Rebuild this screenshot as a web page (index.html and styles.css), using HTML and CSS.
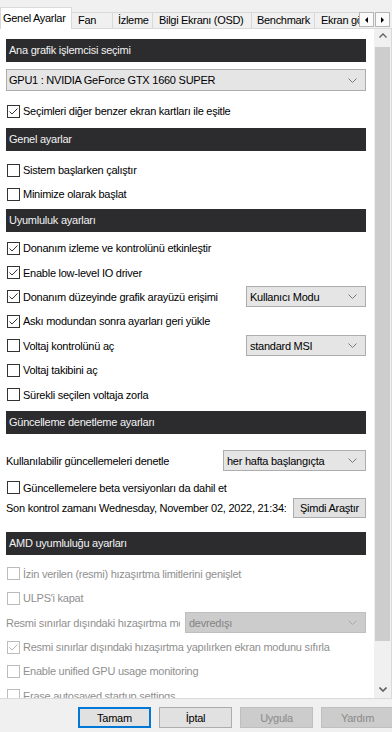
FILE: index.html
```html
<!DOCTYPE html>
<html lang="tr">
<head>
    <meta charset="UTF-8">
    <meta name="viewport" content="width=device-width, initial-scale=1.0">
    <title>Özellikler - Genel Ayarlar</title>
    <link rel="stylesheet" href="styles.css">
</head>
<body>
    <div class="window">
        <div class="tabs">
            <div class="tab active">Genel Ayarlar</div>
            <div class="tab tab-fan">Fan</div>
            <div class="tab tab-monitor">İzleme</div>
            <div class="tab tab-osd">Bilgi Ekranı (OSD)</div>
            <div class="tab tab-bench">Benchmark</div>
            <div class="tab tab-screen">Ekran görüntüsü</div>
            <div class="tab-arrows">
                <div class="arrow-btn"><span class="tri tri-left"></span></div>
                <div class="arrow-btn"><span class="tri tri-right"></span></div>
            </div>
        </div>

        <div class="panel">
            <div class="content">
                <!-- GPU selection -->
                <section class="group">
                    <div class="group-title">Ana grafik işlemcisi seçimi</div>
                    <div class="group-body body-gpu">
                        <div class="combo combo-gpu">
                            <span>GPU1 : NVIDIA GeForce GTX 1660 SUPER</span>
                            <svg class="chev" width="9" height="5" viewBox="0 0 9 5"><path d="M0.5 0.5 L4.5 4.5 L8.5 0.5"/></svg>
                        </div>
                        <div class="row row-sync">
                            <span class="cb"><svg viewBox="0 0 11 11"><path d="M1.5 5.5 L4 8 L9.5 2.5"/></svg></span>
                            <span>Seçimleri diğer benzer ekran kartları ile eşitle</span>
                        </div>
                    </div>
                </section>

                <!-- General -->
                <section class="group group-general">
                    <div class="group-title">Genel ayarlar</div>
                    <div class="group-body body-general">
                        <div class="row"><span class="cb"></span><span>Sistem başlarken çalıştır</span></div>
                        <div class="row"><span class="cb"></span><span>Minimize olarak başlat</span></div>
                    </div>
                </section>

                <!-- Compatibility -->
                <section class="group group-compat">
                    <div class="group-title">Uyumluluk ayarları</div>
                    <div class="group-body body-compat">
                        <div class="row row-tall">
                            <span class="cb"><svg viewBox="0 0 11 11"><path d="M1.5 5.5 L4 8 L9.5 2.5"/></svg></span>
                            <span>Donanım izleme ve kontrolünü etkinleştir</span>
                        </div>
                        <div class="row row-tall">
                            <span class="cb"><svg viewBox="0 0 11 11"><path d="M1.5 5.5 L4 8 L9.5 2.5"/></svg></span>
                            <span>Enable low-level IO driver</span>
                        </div>
                        <div class="row row-tall">
                            <span class="cb"><svg viewBox="0 0 11 11"><path d="M1.5 5.5 L4 8 L9.5 2.5"/></svg></span>
                            <span>Donanım düzeyinde grafik arayüzü erişimi</span>
                            <div class="combo combo-mode">
                                <span>Kullanıcı Modu</span>
                                <svg class="chev" width="9" height="5" viewBox="0 0 9 5"><path d="M0.5 0.5 L4.5 4.5 L8.5 0.5"/></svg>
                            </div>
                        </div>
                        <div class="row row-tall">
                            <span class="cb"><svg viewBox="0 0 11 11"><path d="M1.5 5.5 L4 8 L9.5 2.5"/></svg></span>
                            <span>Askı modundan sonra ayarları geri yükle</span>
                        </div>
                        <div class="row row-tall">
                            <span class="cb"></span>
                            <span>Voltaj kontrolünü aç</span>
                            <div class="combo combo-mode">
                                <span>standard MSI</span>
                                <svg class="chev" width="9" height="5" viewBox="0 0 9 5"><path d="M0.5 0.5 L4.5 4.5 L8.5 0.5"/></svg>
                            </div>
                        </div>
                        <div class="row row-tall"><span class="cb"></span><span>Voltaj takibini aç</span></div>
                        <div class="row row-tall"><span class="cb"></span><span>Sürekli seçilen voltaja zorla</span></div>
                    </div>
                </section>

                <!-- Updates -->
                <section class="group group-update">
                    <div class="group-title">Güncelleme denetleme ayarları</div>
                    <div class="group-body body-update">
                        <div class="row">
                            <span>Kullanılabilir güncellemeleri denetle</span>
                            <div class="combo combo-update">
                                <span>her hafta başlangıçta</span>
                                <svg class="chev" width="9" height="5" viewBox="0 0 9 5"><path d="M0.5 0.5 L4.5 4.5 L8.5 0.5"/></svg>
                            </div>
                        </div>
                        <div class="row row-short row-beta">
                            <span class="cb"></span>
                            <span>Güncellemelere beta versiyonları da dahil et</span>
                        </div>
                        <div class="row row-short">
                            <span class="clip-label">Son kontrol zamanı Wednesday, November 02, 2022, 21:34:17</span>
                            <button class="btn btn-small">Şimdi Araştır</button>
                        </div>
                    </div>
                </section>

                <!-- AMD -->
                <section class="group group-amd">
                    <div class="group-title">AMD uyumluluğu ayarları</div>
                    <div class="group-body body-amd disabled">
                        <div class="row row-tall"><span class="cb"></span><span>İzin verilen (resmi) hızaşırtma limitlerini genişlet</span></div>
                        <div class="row row-tall"><span class="cb"></span><span>ULPS'i kapat</span></div>
                        <div class="row row-tall">
                            <span class="clip-label clip-amd">Resmi sınırlar dışındaki hızaşırtma modu</span>
                            <div class="combo combo-amd">
                                <span>devredışı</span>
                                <svg class="chev" width="9" height="5" viewBox="0 0 9 5"><path d="M0.5 0.5 L4.5 4.5 L8.5 0.5"/></svg>
                            </div>
                        </div>
                        <div class="row row-tall">
                            <span class="cb"><svg viewBox="0 0 11 11"><path d="M1.5 5.5 L4 8 L9.5 2.5"/></svg></span>
                            <span>Resmi sınırlar dışındaki hızaşırtma yapılırken ekran modunu sıfırla</span>
                        </div>
                        <div class="row row-tall"><span class="cb"></span><span>Enable unified GPU usage monitoring</span></div>
                        <div class="row row-tall"><span class="cb"></span><span>Erase autosaved startup settings</span></div>
                    </div>
                </section>
            </div>

            <div class="scrollbar">
                <div class="sb-btn sb-up">
                    <svg width="8" height="5" viewBox="0 0 8 5"><path d="M0.5 4.5 L4 1 L7.5 4.5"/></svg>
                </div>
                <div class="sb-thumb"></div>
                <div class="sb-track"></div>
                <div class="sb-btn sb-down">
                    <svg width="8" height="5" viewBox="0 0 8 5"><path d="M0.5 0.5 L4 4 L7.5 0.5"/></svg>
                </div>
            </div>
        </div>

        <div class="footer">
            <button class="btn btn-default">Tamam</button>
            <button class="btn">İptal</button>
            <button class="btn" disabled>Uygula</button>
            <button class="btn" disabled>Yardım</button>
        </div>
    </div>
</body>
</html>
```

FILE: styles.css
```css
body {
    margin: 0;
    background: #f0f0f0;
    font-family: "Liberation Sans", Arial, sans-serif;
    font-size: 11px;
    letter-spacing: -0.25px;
    color: #000;
}
.window {
    width: 392px;
    height: 732px;
    display: flex;
    flex-direction: column;
    overflow: hidden;
}

/* tab strip */
.tabs {
    height: 29px;
    flex: none;
    display: flex;
    align-items: flex-end;
    box-shadow: inset 0 -1px #d9d9d9;
}
.tab {
    box-sizing: border-box;
    flex: none;
    height: 17px;
    line-height: 15px;
    padding-left: 5px;
    border: 1px solid #d9d9d9;
    border-left: none;
    background: #f0f0f0;
    white-space: nowrap;
    overflow: hidden;
    letter-spacing: -0.3px;
}
.tab.active {
    width: 72px;
    height: 22px;
    line-height: 20px;
    padding-left: 2px;
    border-left: 1px solid #d9d9d9;
    border-bottom: none;
    background: #fff;
}
.tab-fan { width: 41px; padding-left: 6px; }
.tab-monitor { width: 40px; }
.tab-osd { width: 99px; padding-left: 6px; }
.tab-bench { width: 63px; }
.tab-screen { width: 44px; padding-left: 6px; border-right: none; }
.tab-arrows {
    display: flex;
    align-self: flex-start;
    margin-top: 12px;
}
.arrow-btn {
    box-sizing: border-box;
    width: 15px;
    height: 15px;
    border: 1px solid #b4b4b4;
    background: #fafafa;
    display: flex;
    align-items: center;
    justify-content: center;
}
.arrow-btn + .arrow-btn { margin-left: 1px; }
.tri {
    width: 0;
    height: 0;
    border-top: 3px solid transparent;
    border-bottom: 3px solid transparent;
}
.tri-left { border-right: 3px solid #000; }
.tri-right { border-left: 3px solid #000; }

/* panel */
.panel {
    box-sizing: border-box;
    flex: none;
    height: 670px;
    display: flex;
    background: #fff;
    border-right: 1px solid #d9d9d9;
    border-bottom: 1px solid #d9d9d9;
}
.content {
    flex: 1;
    min-width: 0;
    overflow: hidden;
    padding: 10px 8px 0 6px;
}
.group-title {
    height: 23px;
    line-height: 23px;
    padding-left: 3px;
    background: #2c2c2f;
    color: #f2f2f2;
    white-space: nowrap;
}
.group-general { margin-top: 5px; }
.group-compat { margin-top: 3px; }
.group-update { margin-top: 4px; }
.group-amd { margin-top: 14px; }

.body-gpu { padding-top: 7px; }
.body-general { padding-top: 7px; }
.body-compat { padding-top: 4px; }
.body-update { padding-top: 15px; }
.body-amd { padding-top: 7px; }

.row {
    display: flex;
    align-items: center;
    height: 24px;
    white-space: nowrap;
}
.row-tall { height: 24.4px; }
.row-short { height: 20px; }
.row-sync { margin-top: 8px; }
.row-beta { margin-top: 5px; }

.cb {
    box-sizing: border-box;
    flex: none;
    width: 13px;
    height: 13px;
    margin: 0 3px 0 1px;
    border: 1px solid #333;
    background: #fff;
    display: flex;
}
.cb svg {
    width: 11px;
    height: 11px;
    fill: none;
    stroke: #333;
    stroke-width: 1;
}

.combo {
    box-sizing: border-box;
    height: 21px;
    padding: 0 8px 0 3px;
    border: 1px solid #adadad;
    background: #e5e5e5;
    display: flex;
    align-items: center;
    justify-content: space-between;
    white-space: nowrap;
}
.chev {
    fill: none;
    stroke: #7a7a7a;
    stroke-width: 1;
}
.combo-gpu { height: 22px; padding-left: 2px; }
.combo-mode { width: 120px; margin-left: auto; }
.combo-update { width: 143px; margin-left: auto; }
.combo-amd { width: 181px; flex: none; }

.clip-label {
    flex: 1;
    min-width: 0;
    overflow: hidden;
    margin-right: 7px;
}
.clip-amd { margin-right: 5px; }

.btn {
    box-sizing: border-box;
    flex: none;
    width: 73px;
    height: 21px;
    padding: 0;
    border: 1px solid #adadad;
    background: #e1e1e1;
    font: inherit;
    letter-spacing: inherit;
    color: #000;
}
.btn-small { height: 20px; }
.btn-default { border: 2px solid #0078d7; }
.btn:disabled {
    background: #cccccc;
    border-color: #bfbfbf;
    color: #8a8a8a;
}

/* disabled AMD block */
.disabled { color: #8f8f8f; }
.disabled .cb { border-color: #bcbcbc; }
.disabled .cb svg { stroke: #b4b4b4; }
.disabled .combo {
    background: #cccccc;
    border-color: #bfbfbf;
    color: #838383;
}
.disabled .chev { stroke: #a8a8a8; }

/* scrollbar */
.scrollbar {
    flex: none;
    width: 17px;
    background: #f0f0f0;
    display: flex;
    flex-direction: column;
}
.sb-btn {
    height: 18px;
    flex: none;
    display: flex;
    align-items: center;
    justify-content: center;
}
.sb-btn svg {
    fill: none;
    stroke: #606060;
    stroke-width: 1.3;
}
.sb-up { align-items: flex-start; padding-top: 4px; height: 14px; }
.sb-down svg { stroke-width: 1.6; }
.sb-thumb {
    height: 594px;
    margin: 0 1px;
    background: #cdcdcd;
}
.sb-track { flex: 1; }

/* bottom buttons */
.footer {
    flex: 1;
    display: flex;
    gap: 8px;
    padding: 8px 0 0 78px;
    overflow: hidden;
}
```
